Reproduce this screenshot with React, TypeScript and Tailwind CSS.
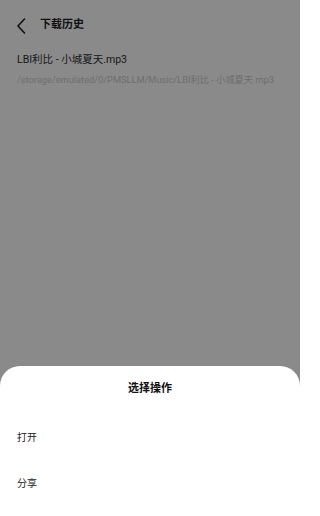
const actions = ["打开", "分享"];

const App = () => {
  return (
    <div
      className="relative w-[300px] h-[516px] overflow-hidden bg-[#8a8a8a]"
      style={{ fontFamily: 'Roboto, "Noto Sans CJK SC", sans-serif' }}
    >
      {/* Header */}
      <div className="flex items-center h-[50px] pl-[17px] pt-[1px]">
        <svg width="9" height="16" viewBox="0 0 9 16" fill="none" className="text-[#111]">
          <path d="M7.5 1 L1 8 L7.5 15" stroke="currentColor" strokeWidth="1.6" strokeLinecap="round" strokeLinejoin="round" />
        </svg>
        <span className="ml-[14px] text-[11px] font-bold text-[#111]">下载历史</span>
      </div>

      {/* Download item */}
      <div className="px-[17px] pt-[1px]">
        <div className="text-[10.5px] leading-[18px] text-[#161616]">LBI利比 - 小城夏天.mp3</div>
        <div className="text-[9.25px] leading-[16px] mt-[3px] text-[#6e6e6e] whitespace-nowrap">
          /storage/emulated/0/PMSLLM/Music/LBI利比 - 小城夏天.mp3
        </div>
      </div>

      {/* Bottom sheet */}
      <div className="absolute left-0 right-0 bottom-0 h-[150px] bg-white rounded-t-[20px]">
        <div className="text-center pt-[14px] text-[11px] leading-[18px] font-bold text-[#111]">
          选择操作
        </div>
        <div className="flex flex-col pt-[16px]">
          {actions.map((a) => (
            <div key={a} className="h-[46px] flex items-center px-[17px] text-[10px] text-[#222]">
              {a}
            </div>
          ))}
        </div>
      </div>
    </div>
  );
};

export default App;
